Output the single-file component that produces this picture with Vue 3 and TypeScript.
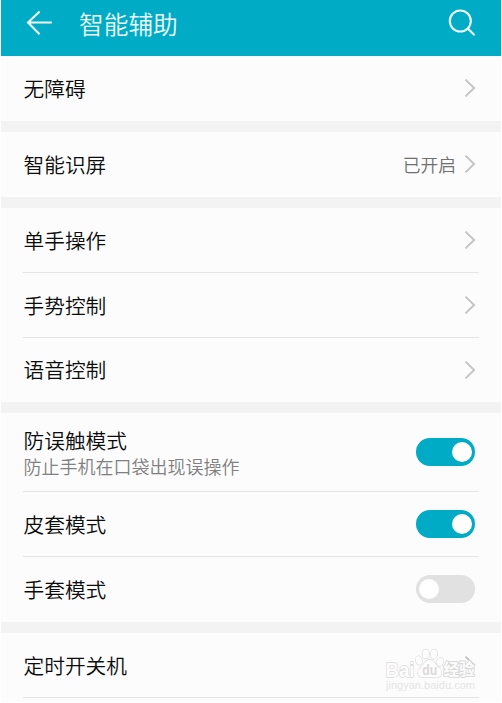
<script setup lang="ts">
import { reactive } from 'vue'

interface Item {
  title: string
  note?: string
  value?: string
  on?: boolean
}

const groups = reactive<Item[][]>([
  [{ title: '无障碍' }],
  [{ title: '智能识屏', value: '已开启' }],
  [{ title: '单手操作' }, { title: '手势控制' }, { title: '语音控制' }],
  [
    { title: '防误触模式', note: '防止手机在口袋出现误操作', on: true },
    { title: '皮套模式', on: true },
    { title: '手套模式', on: false },
  ],
  [{ title: '定时开关机' }],
])

function toggle(item: Item) {
  if (item.on !== undefined) item.on = !item.on
}
</script>

<template>
  <div class="screen">
    <header class="bar">
      <svg class="back" width="28" height="28" viewBox="0 0 28 28">
        <path d="M16.6 2.4 5 13.5l11.6 11.8M5 13.5h23.8" />
      </svg>
      <h1>智能辅助</h1>
      <svg class="search" width="28" height="28" viewBox="0 0 28 28">
        <circle cx="12.3" cy="12" r="10.5" />
        <path d="m19.8 19.5 6.8 6.8" />
      </svg>
    </header>

    <main>
      <section v-for="(group, g) in groups" :key="g" class="group">
        <div
          v-for="item in group"
          :key="item.title"
          class="row"
          :class="{ tall: item.note }"
          @click="toggle(item)"
        >
          <div class="label">
            <div class="title">{{ item.title }}</div>
            <div v-if="item.note" class="note">{{ item.note }}</div>
          </div>
          <span v-if="item.value" class="value">{{ item.value }}</span>
          <span v-if="item.on !== undefined" class="switch" :class="{ on: item.on }">
            <i class="knob"></i>
          </span>
          <svg v-else class="chevron" width="12" height="20" viewBox="0 0 12 20">
            <path d="m1.5 1.6 8.6 8.4-8.6 8.4" />
          </svg>
        </div>
      </section>
    </main>

    <svg class="mark" width="100" height="50" viewBox="0 0 100 50">
      <g class="brand">
        <text x="3.5" y="30.5" font-size="20" textLength="29" lengthAdjust="spacingAndGlyphs">Bai</text>
        <ellipse cx="37" cy="14.5" rx="3.2" ry="4.3" transform="rotate(-15 37 14.5)" />
        <ellipse cx="43.8" cy="8" rx="3.3" ry="4.6" />
        <ellipse cx="52" cy="8.2" rx="3.3" ry="4.6" transform="rotate(8 52 8.2)" />
        <ellipse cx="58" cy="15.8" rx="3.1" ry="4.3" transform="rotate(18 58 15.8)" />
        <path d="M47.7 14c-4.4 0-5.5 4.1-8 6.5-3 2.7-4.5 4.5-3.7 7.6 1.3 4.6 6.8 3.2 11.7 3.2s10.4 1.4 11.7-3.2c.8-3.1-.8-4.9-3.7-7.6-2.6-2.4-3.6-6.5-8-6.5Z" />
        <text class="du" x="40.3" y="29" font-size="14.5" textLength="15" lengthAdjust="spacingAndGlyphs">du</text>
        <text class="cjk" x="61.5" y="29.3" font-size="15.5" textLength="31">经验</text>
      </g>
      <text class="site" x="4" y="43" font-size="10.5" textLength="89" lengthAdjust="spacingAndGlyphs">jingyan.baidu.com</text>
    </svg>
  </div>
</template>

<style>
body {
  background: #fff;
}
</style>

<style scoped>
.screen {
  position: relative;
  box-sizing: border-box;
  width: 500px;
  height: 702px;
  margin-left: 1px;
  overflow: hidden;
  background: #fcfcfc;
  font-family: 'Noto Sans CJK SC', sans-serif;
  color: #0c0c0c;
}

.bar {
  box-sizing: border-box;
  display: flex;
  align-items: center;
  height: 56px;
  padding: 0 25px 10px 22px;
  background: #00abc5;
}

.bar svg {
  fill: none;
  stroke: #effcfe;
  stroke-width: 2.1;
  overflow: visible;
}

h1 {
  flex: 1;
  margin: 0 0 1px 28px;
  font-size: 24.7px;
  font-weight: 350;
  line-height: 36px;
  color: #effcfe;
}

.group + .group {
  border-top: 11px solid #f3f3f3;
}

.row {
  box-sizing: border-box;
  display: flex;
  align-items: center;
  height: 65px;
  margin: 0 22px;
  padding: 0 4px 0 0.5px;
  border-bottom: 1px solid #e5e5e5;
}

.row:last-child {
  border-bottom-color: transparent;
}

.group:nth-child(3) .row:last-child {
  height: 64px;
}

.group:last-child .row {
  border-bottom-color: #e5e5e5;
}

.row.tall {
  height: 79px;
}

.label {
  flex: 1;
}

.title {
  padding-bottom: 1px;
  font-size: 20.7px;
  font-weight: 350;
  line-height: 28px;
}

.tall .title {
  padding-bottom: 0;
}

.note {
  font-size: 18px;
  font-weight: 350;
  line-height: 25px;
  color: #808080;
}

.value {
  margin-right: 8px;
  font-size: 17.8px;
  font-weight: 350;
  line-height: 26px;
  color: #707070;
}

.chevron {
  margin-right: -1px;
  fill: none;
  stroke: #c4c4c4;
  stroke-width: 1.9;
}

.switch {
  box-sizing: border-box;
  display: flex;
  width: 59px;
  height: 28px;
  padding: 4px 3px;
  border-radius: 14px;
  background: #e1e1e1;
}

.switch.on {
  justify-content: flex-end;
  background: #00abc5;
}

.knob {
  width: 20px;
  height: 20px;
  border-radius: 50%;
  background: #fff;
}

.mark {
  position: absolute;
  left: 381px;
  top: 646px;
  font-family: 'Liberation Sans', sans-serif;
  font-weight: bold;
  fill: #fdfdfd;
  stroke: #d9d9d9;
  stroke-width: 1.3;
  stroke-linejoin: round;
  paint-order: stroke;
}

.du {
  fill: #d9d9d9;
  stroke: none;
}

.cjk {
  font-family: 'Noto Sans CJK SC', sans-serif;
  stroke-width: 2;
}

.site {
  font-weight: normal;
  fill: #e4e4e4;
  stroke: none;
}
</style>
